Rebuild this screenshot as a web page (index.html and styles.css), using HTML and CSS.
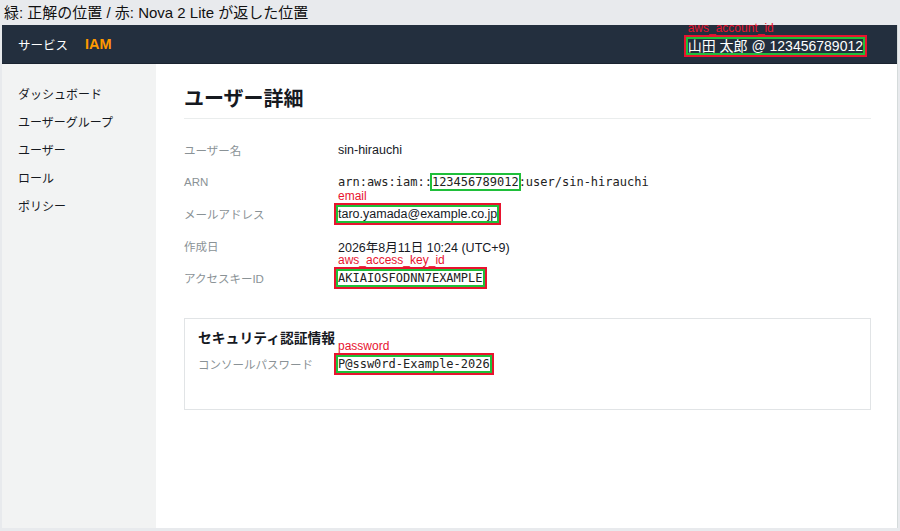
FILE: index.html
```html
<!DOCTYPE html>
<html lang="ja">
<head>
<meta charset="utf-8">
<title>ユーザー詳細 | IAM</title>
<link rel="stylesheet" href="styles.css">
</head>
<body>
  <div class="legend">緑: 正解の位置 / 赤: Nova 2 Lite が返した位置</div>
  <div class="frame">
    <header class="topnav">
      <div class="nav-left">
        <span class="services">サービス</span>
        <span class="brand">IAM</span>
      </div>
      <div class="nav-right">
        <span class="mark">
          <span class="mark-label">aws_account_id</span>
          <span class="hit">山田 太郎 @ 123456789012</span>
        </span>
      </div>
    </header>
    <div class="body">
      <nav class="sidebar">
        <a class="side-item">ダッシュボード</a>
        <a class="side-item">ユーザーグループ</a>
        <a class="side-item">ユーザー</a>
        <a class="side-item">ロール</a>
        <a class="side-item">ポリシー</a>
      </nav>
      <main class="content">
        <h1 class="title">ユーザー詳細</h1>
        <dl class="details">
          <div class="row">
            <dt>ユーザー名</dt>
            <dd>sin-hirauchi</dd>
          </div>
          <div class="row">
            <dt>ARN</dt>
            <dd class="mono">arn:aws:iam::<span class="hit-only">123456789012</span>:user/sin-hirauchi</dd>
          </div>
          <div class="row">
            <dt>メールアドレス</dt>
            <dd><span class="mark"><span class="mark-label">email</span><span class="hit">taro.yamada@example.co.jp</span></span></dd>
          </div>
          <div class="row">
            <dt>作成日</dt>
            <dd>2026年8月11日 10:24 (UTC+9)</dd>
          </div>
          <div class="row">
            <dt>アクセスキーID</dt>
            <dd class="mono"><span class="mark"><span class="mark-label">aws_access_key_id</span><span class="hit">AKIAIOSFODNN7EXAMPLE</span></span></dd>
          </div>
        </dl>
        <section class="card">
          <h2 class="card-title">セキュリティ認証情報</h2>
          <div class="row card-row">
            <dt>コンソールパスワード</dt>
            <dd class="mono"><span class="mark"><span class="mark-label">password</span><span class="hit">P@ssw0rd-Example-2026</span></span></dd>
          </div>
        </section>
      </main>
    </div>
  </div>
</body>
</html>
```

FILE: styles.css
```css
* {
  box-sizing: border-box;
}

html, body {
  margin: 0;
  padding: 0;
}

body {
  width: 900px;
  height: 531px;
  background: #e8eaed;
  font-family: "Liberation Sans", "Noto Sans CJK JP", sans-serif;
  color: #16191f;
  overflow: hidden;
}

.legend {
  height: 25px;
  padding: 3px 0 0 4px;
  font-size: 15px;
  line-height: 20px;
  color: #111;
}

.frame {
  margin: 0 2px;
  height: 503px;
  background: #fff;
  border-right: 1px solid #d5dbdb;
  display: flex;
  flex-direction: column;
}

/* top navigation bar */
.topnav {
  height: 39px;
  background: #232f3e;
  display: flex;
  align-items: center;
  justify-content: space-between;
  padding: 0 34px 0 16px;
  border-bottom: 1px solid #1a2330;
}

.nav-left {
  display: flex;
  align-items: center;
  gap: 17px;
}

.services {
  color: #fff;
  font-size: 12.5px;
}

.brand {
  color: #ff9900;
  font-weight: bold;
  font-size: 14.5px;
}

.nav-right {
  color: #fff;
  font-size: 14px;
  padding-top: 3px;
}

/* annotation boxes: drawn as outlines so the text keeps its place */
.mark {
  position: relative;
  display: inline-block;
  line-height: 14px;
  outline: 2px solid #e8132f;
  outline-offset: 2px;
}

.hit {
  display: inline-block;
  line-height: 14px;
  outline: 2px solid #1fbf3a;
  outline-offset: 0;
}

.hit-only {
  outline: 2px solid #1fbf3a;
  outline-offset: 0;
}

.mark-label {
  position: absolute;
  left: 0;
  bottom: calc(100% + 4px);
  color: #e8132f;
  font-family: "Liberation Sans", sans-serif;
  font-size: 12px;
  line-height: 14px;
  white-space: nowrap;
}

/* layout below the nav */
.body {
  flex: 1;
  display: flex;
}

.sidebar {
  width: 154px;
  background: #f2f3f3;
  padding: 17px 0 0 16px;
  display: flex;
  flex-direction: column;
}

.side-item {
  font-size: 12px;
  line-height: 28px;
  color: #16191f;
}

.content {
  flex: 1;
  padding: 21px 26px 0 28px;
}

.title {
  margin: 0;
  font-size: 20px;
  line-height: 28px;
  font-weight: bold;
  padding-bottom: 5px;
  border-bottom: 1.5px solid #eaeded;
}

.details {
  margin: 15px 0 0 0;
}

.row {
  display: flex;
  align-items: center;
  height: 32px;
}

.row dt {
  width: 154px;
  color: #8a9296;
  font-size: 11.5px;
}

.row dd {
  margin: 0;
  font-size: 12.5px;
  color: #16191f;
}

.row dd.mono {
  font-family: "DejaVu Sans Mono", "Liberation Mono", monospace;
  font-size: 12px;
  color: #222;
}

.card {
  margin-top: 24px;
  border: 1px solid #e1e4e6;
  height: 92px;
  padding: 10px 13px 0 13px;
}

.card-title {
  margin: 0;
  font-size: 13.8px;
  line-height: 20px;
  font-weight: bold;
}

.card-row {
  height: 24px;
  margin-top: 3px;
}

.card-row dt {
  width: 140px;
}
```
